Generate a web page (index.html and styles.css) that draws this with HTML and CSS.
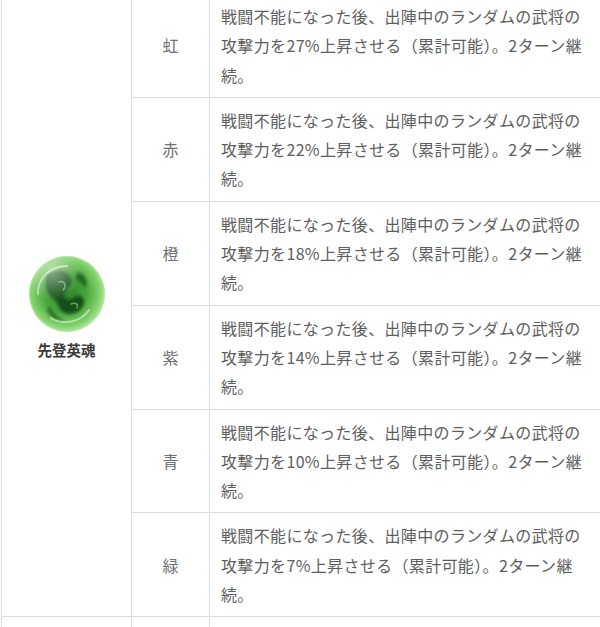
FILE: index.html
```html
<!DOCTYPE html>
<html lang="ja">
<head>
<meta charset="utf-8">
<title>先登英魂</title>
<link rel="stylesheet" href="styles.css">
</head>
<body>
<table class="skill">
  <colgroup>
    <col class="c-name">
    <col class="c-grade">
    <col class="c-desc">
  </colgroup>
  <tr>
    <td class="name" rowspan="6">
      <div class="soul">
        <svg class="orb" width="80" height="80" viewBox="0 0 80 80" aria-hidden="true">
          <defs>
            <radialGradient id="g1" cx="48%" cy="48%" r="55%">
              <stop offset="0" stop-color="#2a7f28"/>
              <stop offset="0.5" stop-color="#47a63a"/>
              <stop offset="0.82" stop-color="#84d26e"/>
              <stop offset="1" stop-color="#c4eeb4"/>
            </radialGradient>
            <radialGradient id="g2" cx="30%" cy="20%" r="40%">
              <stop offset="0" stop-color="#ffffff" stop-opacity="0.5"/>
              <stop offset="1" stop-color="#ffffff" stop-opacity="0"/>
            </radialGradient>
            <clipPath id="cp"><circle cx="40" cy="40" r="38"/></clipPath>
            <filter id="soft" x="-20%" y="-20%" width="140%" height="140%">
              <feGaussianBlur stdDeviation="1.4"/>
            </filter>
            <filter id="soft2" x="-20%" y="-20%" width="140%" height="140%">
              <feGaussianBlur stdDeviation="0.6"/>
            </filter>
          </defs>
          <circle cx="40" cy="40" r="38" fill="url(#g1)"/>
          <g clip-path="url(#cp)">
            <g filter="url(#soft)" opacity="0.85">
              <path d="M20 20 C28 14 40 16 44 24 C47 30 40 33 38 38 C35 44 42 48 46 44 C52 38 60 44 56 52 C52 60 42 62 36 58 C30 54 32 48 28 46 C22 42 16 34 20 20 Z" fill="#0f4515"/>
              <path d="M50 18 C58 20 62 28 58 34 C56 30 52 26 48 26 Z" fill="#175e1d"/>
              <path d="M22 52 C26 58 30 64 38 66 C30 68 22 62 20 56 Z" fill="#1b6620"/>
            </g>
            <g filter="url(#soft2)" fill="none" stroke-linecap="round">
              <path d="M11 40 C10 24 24 12 40 12" stroke="#dcf8cf" stroke-width="1.8" opacity="0.65"/>
              <path d="M24 64 C36 72 54 68 62 56" stroke="#e0fad4" stroke-width="2" opacity="0.6"/>
              <path d="M32 28 C38 26 40 32 36 36" stroke="#7fd266" stroke-width="1.6" opacity="0.7"/>
              <path d="M44 50 C48 48 52 50 50 54" stroke="#8fdc76" stroke-width="1.5" opacity="0.6"/>
            </g>
          </g>
          <circle cx="40" cy="40" r="38" fill="url(#g2)"/>
          <circle cx="40" cy="40" r="37.5" fill="none" stroke="#b8eaa6" stroke-width="1" opacity="0.8"/>
        </svg>
        <span class="soul-name">先登英魂</span>
      </div>
    </td>
    <td class="grade">虹</td>
    <td class="desc">戦闘不能になった後、出陣中のランダムの武将の攻撃力を27%上昇させる（累計可能）。2ターン継続。</td>
  </tr>
  <tr>
    <td class="grade">赤</td>
    <td class="desc">戦闘不能になった後、出陣中のランダムの武将の攻撃力を22%上昇させる（累計可能）。2ターン継続。</td>
  </tr>
  <tr>
    <td class="grade">橙</td>
    <td class="desc">戦闘不能になった後、出陣中のランダムの武将の攻撃力を18%上昇させる（累計可能）。2ターン継続。</td>
  </tr>
  <tr>
    <td class="grade">紫</td>
    <td class="desc">戦闘不能になった後、出陣中のランダムの武将の攻撃力を14%上昇させる（累計可能）。2ターン継続。</td>
  </tr>
  <tr>
    <td class="grade">青</td>
    <td class="desc">戦闘不能になった後、出陣中のランダムの武将の攻撃力を10%上昇させる（累計可能）。2ターン継続。</td>
  </tr>
  <tr>
    <td class="grade">緑</td>
    <td class="desc">戦闘不能になった後、出陣中のランダムの武将の攻撃力を7%上昇させる（累計可能）。2ターン継続。</td>
  </tr>
  <tr class="next">
    <td class="name"></td>
    <td class="grade"></td>
    <td class="desc"></td>
  </tr>
</table>
</body>
</html>
```

FILE: styles.css
```css
html, body {
  margin: 0;
  padding: 0;
  background: #ffffff;
}

body {
  font-family: "Noto Sans CJK SC", "Noto Sans CJK JP", "Noto Sans", sans-serif;
  overflow: hidden;
}

.skill {
  border-collapse: collapse;
  table-layout: fixed;
  width: 599px;
  margin: -7px 0 0 1px;
  border: 1px solid #dcdcdc;
}

.c-name { width: 130px; }
.c-grade { width: 78px; }
.c-desc { width: 391px; }

.skill td {
  border: 1px solid #dcdcdc;
  vertical-align: middle;
}

.name {
  text-align: center;
}

.soul {
  display: flex;
  flex-direction: column;
  align-items: center;
  gap: 4px;
  padding-top: 6px;
}

.orb {
  display: block;
}

.soul-name {
  font-size: 14.5px;
  font-weight: 700;
  color: #3a3a3a;
  line-height: 24px;
}

.grade {
  text-align: center;
  font-size: 16px;
  color: #707070;
  line-height: 24px;
}

.desc {
  padding: 8px 8px 7px 11px;
  font-size: 16px;
  letter-spacing: 0.35px;
  line-height: 29.3px;
  color: #5e5e5e;
}

.next td {
  height: 40px;
}
```
